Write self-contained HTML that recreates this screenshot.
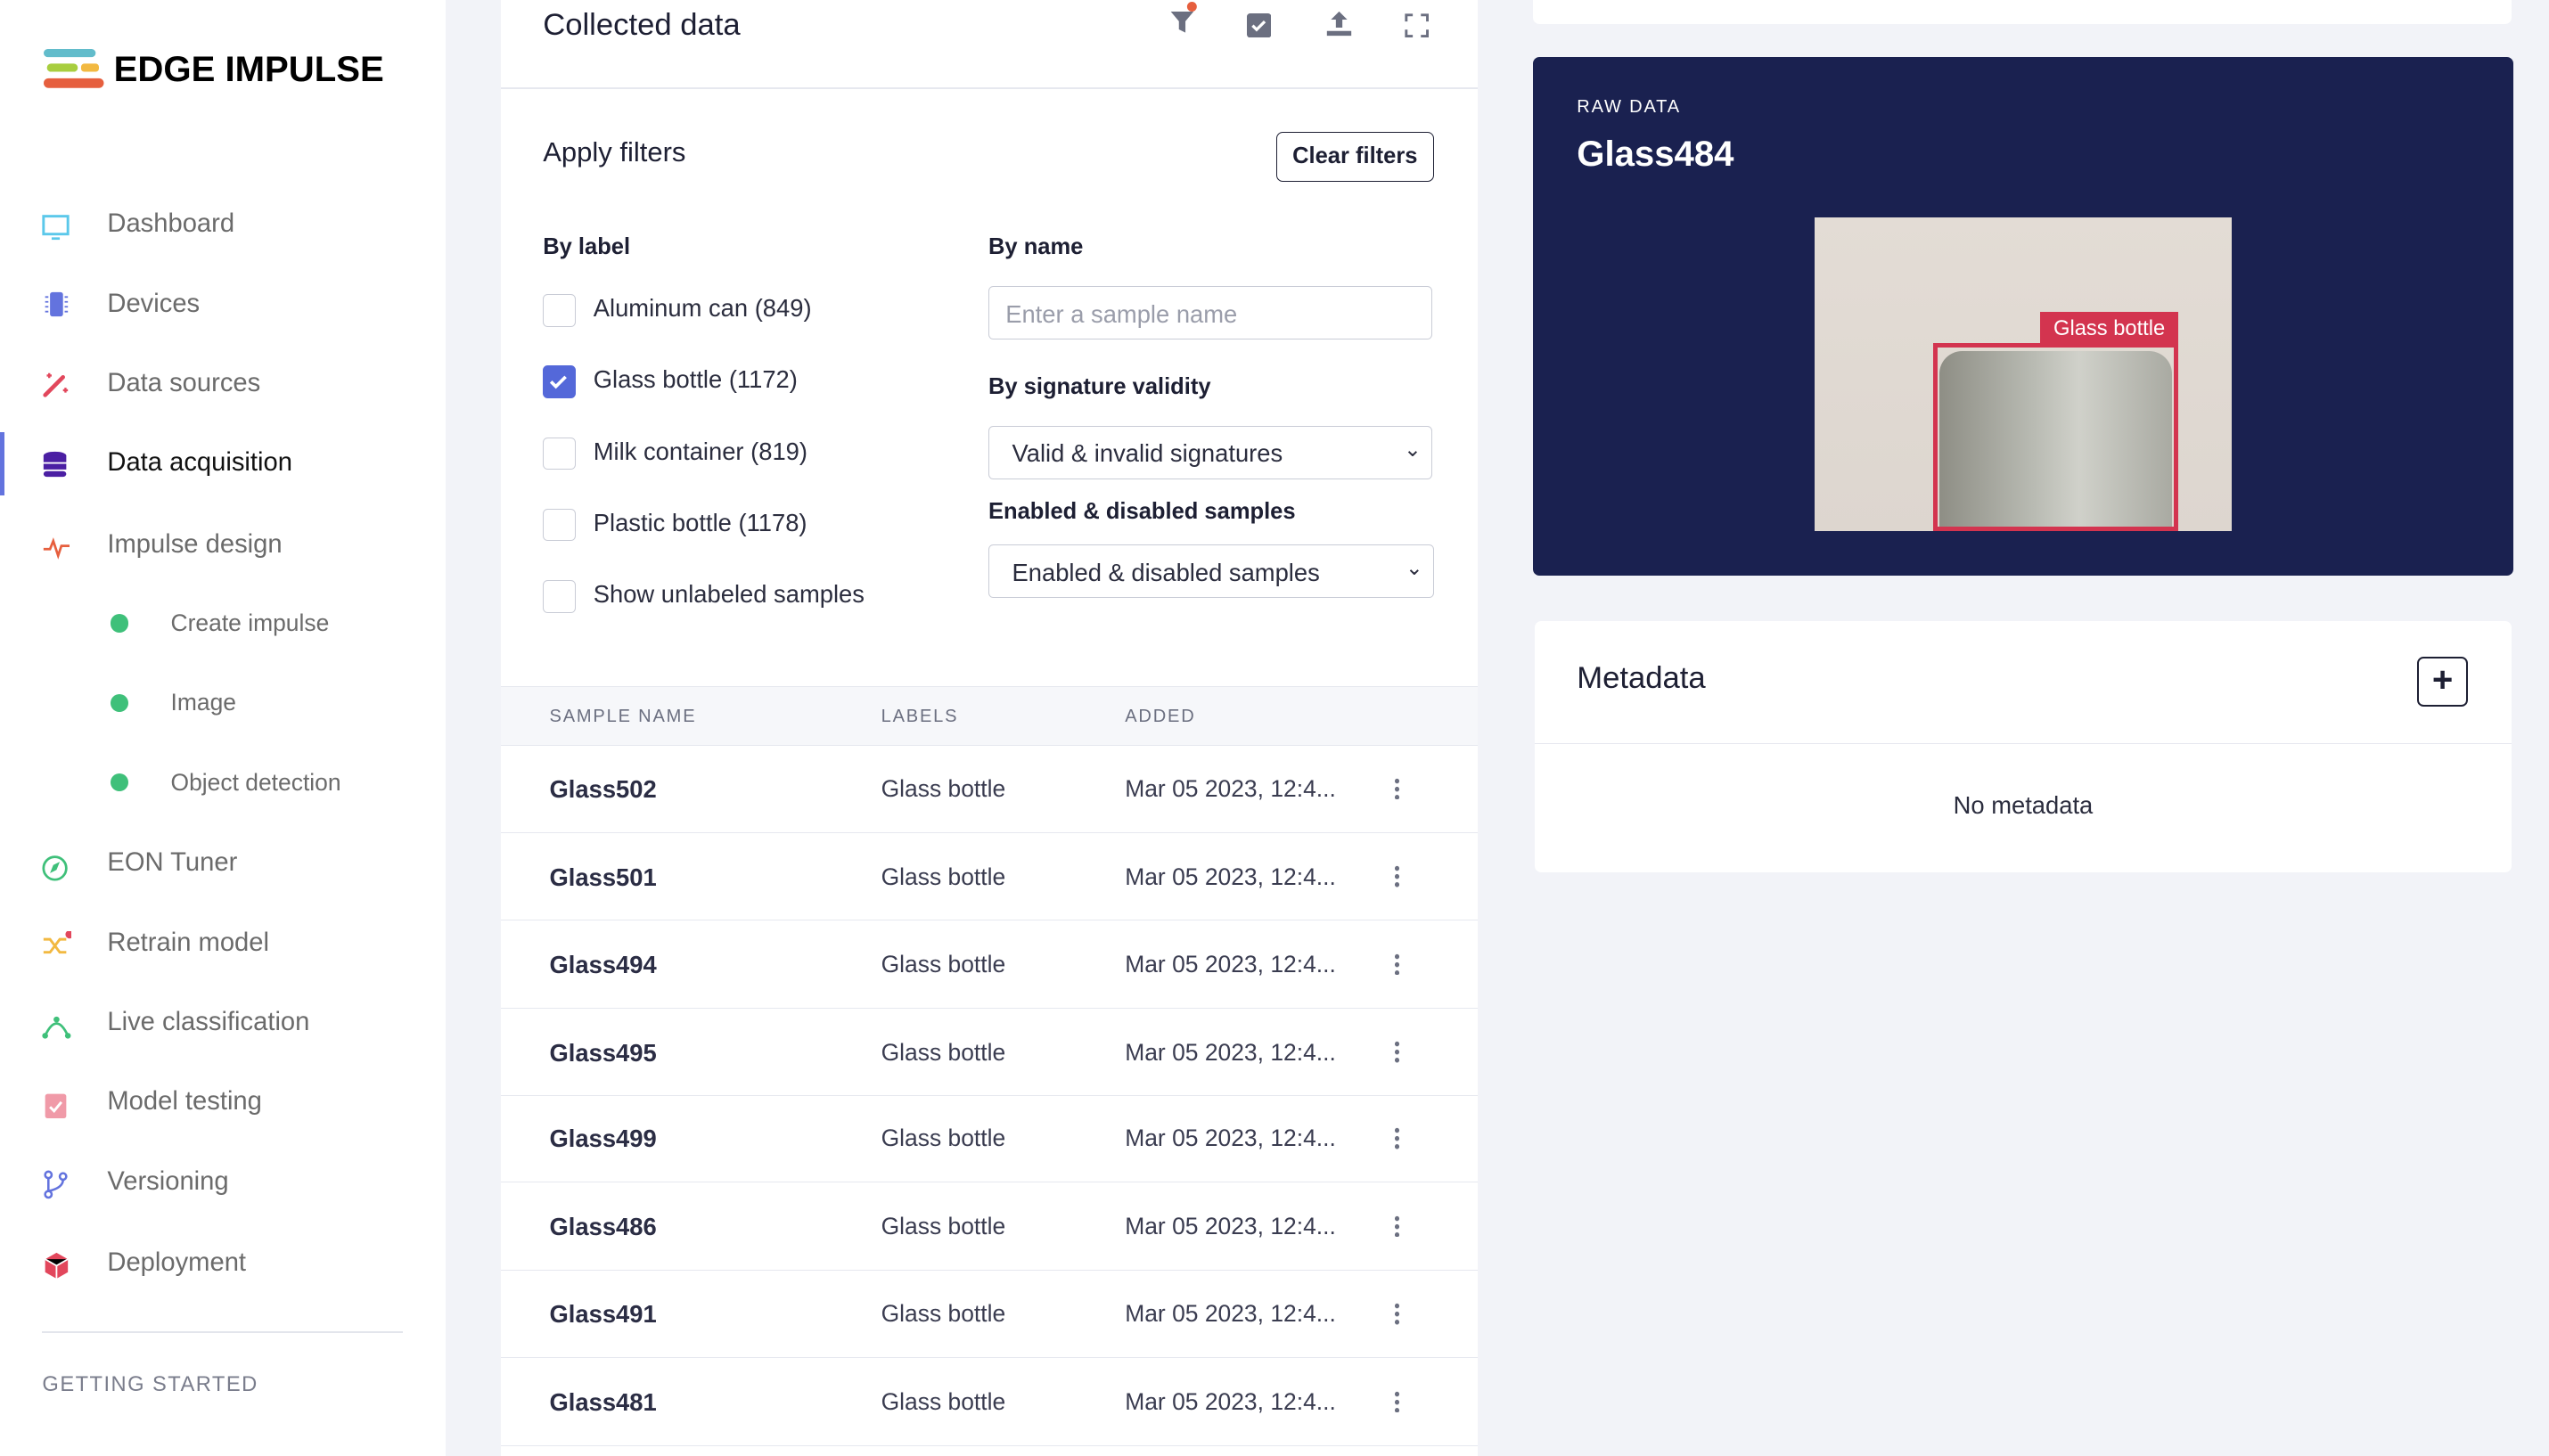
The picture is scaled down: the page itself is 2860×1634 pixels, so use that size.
<!DOCTYPE html>
<html><head><meta charset="utf-8"><style>
html,body{margin:0;padding:0;}
body{width:1568px;height:896px;zoom:1.824;overflow:hidden;background:#f2f3f8;font-family:"Liberation Sans",sans-serif;position:relative;color:#1d1f33}
.abs{position:absolute}
.side{left:0;top:0;width:274px;height:896px;background:#fff}
.nav{position:absolute;left:66px;font-size:16px;color:#6b6b6b}
.ico{position:absolute;left:26px;width:18px;height:18px}
.sub{position:absolute;left:105px;font-size:14.5px;color:#6b6b6b}
.dot{position:absolute;left:68px;width:11px;height:11px;border-radius:50%;background:#3fc07a}
.mid{left:308px;top:0;width:601px;height:896px;background:#fff}
.cb{position:absolute;left:334px;width:20px;height:20px;border:1px solid #c9ccd6;border-radius:3px;box-sizing:border-box;background:#fff}
.lbl{position:absolute;left:365px;font-size:15px;color:#2b2d3e}
.h{position:absolute;font-size:14px;font-weight:bold;color:#1d1f33}
.inp{position:absolute;left:608px;width:273px;height:33px;border:1px solid #c9ccd6;border-radius:3px;box-sizing:border-box;font-size:15px;padding:8px 10px;color:#2b2d3e}
.row{position:absolute;left:308px;width:601px;height:53px;border-bottom:1px solid #e6e8ef}
.row .n{position:absolute;left:30px;top:18px;font-size:15px;font-weight:bold;color:#2b2d44}
.row .l{position:absolute;left:234px;top:18px;font-size:14.5px;color:#3a3c50}
.row .d{position:absolute;left:384px;top:18px;font-size:14.5px;color:#3a3c50}
.row .m{position:absolute;left:550px;top:19px;width:3px;height:14px;background:radial-gradient(circle,#6b6f80 1.4px,transparent 1.6px) 0 0/3px 5px}
</style></head><body>
<div class="abs side"></div>
<svg class="abs" style="left:27px;top:30px" width="38" height="25" viewBox="0 0 38 25"><rect x="0" y="0" width="32" height="5" rx="2.5" fill="#62bccb"/><rect x="2" y="9" width="19" height="5" rx="2.5" fill="#a8ce3f"/><rect x="23" y="9" width="11" height="5" rx="2" fill="#f2b941"/><rect x="0" y="18" width="37" height="6" rx="3" fill="#e65f3e"/></svg>
<div class="abs" style="left:70px;top:30px;font-size:22px;font-weight:bold;color:#000">EDGE IMPULSE</div>

<svg class="ico" style="top:131px" viewBox="0 0 18 18"><rect x="1" y="2" width="15" height="11" fill="none" stroke="#5bc8ea" stroke-width="1.6"/><rect x="6" y="15" width="5" height="1.5" fill="#5bc8ea"/></svg><div class="nav" style="top:129px">Dashboard</div>
<svg class="ico" style="top:179px" viewBox="0 0 18 18"><rect x="5" y="1" width="8" height="15" rx="1.5" fill="#6373de"/><path d="M2 4h2M2 7h2M2 10h2M2 13h2M14 4h2M14 7h2M14 10h2M14 13h2" stroke="#6373de"/></svg><div class="nav" style="top:178px">Devices</div>
<svg class="ico" style="top:228px" viewBox="0 0 18 18"><path d="M2 15L13 4" stroke="#e2475c" stroke-width="2.5" stroke-linecap="round"/><path d="M3 3h3M4.5 1.5v3M13 12h3M14.5 10.5v3" stroke="#e2475c" stroke-width="1.3"/></svg><div class="nav" style="top:227px">Data sources</div>
<div class="abs" style="left:0;top:266px;width:3px;height:39px;background:#6373de"></div>
<svg class="ico" style="top:277px" viewBox="0 0 18 18"><ellipse cx="8" cy="3.5" rx="7" ry="2.5" fill="#4b1fa3"/><rect x="1" y="3.5" width="14" height="4" fill="#4b1fa3"/><rect x="1" y="8.5" width="14" height="3.5" fill="#4b1fa3"/><rect x="1" y="13" width="14" height="3.5" rx="2" fill="#4b1fa3"/></svg><div class="nav" style="top:276px;color:#111">Data acquisition</div>
<svg class="ico" style="top:328px" viewBox="0 0 18 18"><path d="M1 10h4l2-5 3 9 2-6h5" fill="none" stroke="#e65f3e" stroke-width="1.5"/></svg><div class="nav" style="top:326px">Impulse design</div>
<div class="dot" style="top:378px"></div><div class="sub" style="top:375px">Create impulse</div>
<div class="dot" style="top:427px"></div><div class="sub" style="top:424px">Image</div>
<div class="dot" style="top:476px"></div><div class="sub" style="top:473px">Object detection</div>
<svg class="ico" style="top:525px" viewBox="0 0 18 18"><circle cx="8" cy="9" r="7" fill="none" stroke="#3fc07a" stroke-width="1.5"/><path d="M5 12l2-5 4-2-2 5z" fill="#3fc07a"/></svg><div class="nav" style="top:522px">EON Tuner</div>
<svg class="ico" style="top:573px" viewBox="0 0 18 18"><path d="M1 5h4l6 8h4M1 13h4l6-8h4" fill="none" stroke="#f2b941" stroke-width="1.6"/><circle cx="17" cy="2" r="2.5" fill="#e2475c"/></svg><div class="nav" style="top:571px">Retrain model</div>
<svg class="ico" style="top:622px" viewBox="0 0 18 18"><path d="M2 15Q9 0 16 15" fill="none" stroke="#3fc07a" stroke-width="1.5"/><circle cx="2" cy="15" r="1.8" fill="#3fc07a"/><circle cx="16" cy="15" r="1.8" fill="#3fc07a"/><circle cx="9" cy="5" r="1.8" fill="#3fc07a"/></svg><div class="nav" style="top:620px">Live classification</div>
<svg class="ico" style="top:671px" viewBox="0 0 18 18"><rect x="2" y="2" width="13" height="15" rx="1.5" fill="#f09aa8"/><path d="M5 10l2.5 2.5L12 7" fill="none" stroke="#fff" stroke-width="1.6"/></svg><div class="nav" style="top:669px">Model testing</div>
<svg class="ico" style="top:720px" viewBox="0 0 18 18"><circle cx="4" cy="3" r="2" fill="none" stroke="#6373de" stroke-width="1.4"/><circle cx="4" cy="15" r="2" fill="none" stroke="#6373de" stroke-width="1.4"/><circle cx="13" cy="4" r="2" fill="none" stroke="#6373de" stroke-width="1.4"/><path d="M4 5v8M13 6q0 5-9 7" fill="none" stroke="#6373de" stroke-width="1.4"/></svg><div class="nav" style="top:718px">Versioning</div>
<svg class="ico" style="top:770px" viewBox="0 0 18 18"><path d="M9 1l7 4v8l-7 4-7-4V5z" fill="#e2475c"/><path d="M2 5l7 4 7-4M9 9v8" stroke="#fff" stroke-width="1"/></svg><div class="nav" style="top:768px">Deployment</div>
<div class="abs" style="left:26px;top:819px;width:222px;height:1px;background:#e3e5ec"></div>
<div class="abs" style="left:26px;top:845px;font-size:13px;letter-spacing:0.8px;color:#7a7d8c">GETTING STARTED</div>

<div class="abs mid"></div>
<div class="abs" style="left:334px;top:5px;font-size:19px;color:#1d1f33">Collected data</div>
<svg class="abs" style="left:718px;top:1px" width="20" height="22" viewBox="0 0 20 22"><path d="M2 6h14l-5 6v7l-4-2v-5z" fill="#6b6f80"/><circle cx="15" cy="3" r="3" fill="#e65f3e"/></svg>
<svg class="abs" style="left:767px;top:8px" width="15" height="15" viewBox="0 0 15 15"><rect x="0" y="0" width="15" height="15" rx="2" fill="#6b6f80"/><path d="M3.5 7.5l2.5 2.5 5-5" fill="none" stroke="#fff" stroke-width="1.8"/></svg>
<svg class="abs" style="left:815px;top:6px" width="17" height="17" viewBox="0 0 17 17"><path d="M8.5 1l5 5h-3v5h-4V6h-3z M1 13h15v3H1z" fill="#6b6f80"/></svg>
<svg class="abs" style="left:864px;top:8px" width="15" height="15" viewBox="0 0 15 15"><path d="M1 5V1h4M10 1h4v4M14 10v4h-4M5 14H1v-4" fill="none" stroke="#6b6f80" stroke-width="1.6"/></svg>
<div class="abs" style="left:308px;top:54px;width:601px;height:1px;background:#e6e8ef"></div>
<div class="abs" style="left:334px;top:84px;font-size:17px;color:#1d1f33">Apply filters</div>
<div class="abs" style="left:785px;top:81px;width:97px;height:31px;border:1px solid #1d1f33;border-radius:4px;box-sizing:border-box;font-size:14px;font-weight:bold;text-align:center;line-height:29px">Clear filters</div>
<div class="h" style="left:334px;top:144px">By label</div>
<div class="h" style="left:608px;top:144px">By name</div>
<div class="cb" style="top:181px"></div><div class="lbl" style="top:181px">Aluminum can (849)</div>
<div class="cb" style="top:225px;background:#5468d9;border-color:#5468d9"><svg width="18" height="18" viewBox="0 0 18 18"><path d="M4.5 9.5l3 3 6-6" fill="none" stroke="#fff" stroke-width="2"/></svg></div><div class="lbl" style="top:225px">Glass bottle (1172)</div>
<div class="cb" style="top:269px"></div><div class="lbl" style="top:269px">Milk container (819)</div>
<div class="cb" style="top:313px"></div><div class="lbl" style="top:313px">Plastic bottle (1178)</div>
<div class="cb" style="top:357px"></div><div class="lbl" style="top:357px">Show unlabeled samples</div>
<div class="inp" style="top:176px;color:#9a9daa">Enter a sample name</div>
<div class="h" style="left:608px;top:230px">By signature validity</div>
<div class="inp" style="top:262px;padding-left:14px">Valid &amp; invalid signatures<span style="position:absolute;right:6px;top:6px;font-size:13px">&#8964;</span></div>
<div class="h" style="left:608px;top:307px">Enabled &amp; disabled samples</div>
<div class="inp" style="top:335px;padding-left:14px;width:274px">Enabled &amp; disabled samples<span style="position:absolute;right:6px;top:6px;font-size:13px">&#8964;</span></div>
<div class="abs" style="left:308px;top:422px;width:601px;height:37px;background:#f6f7fa;border-top:1px solid #e6e8ef;border-bottom:1px solid #e6e8ef;box-sizing:border-box"></div>
<div class="abs" style="left:338px;top:435px;font-size:11px;letter-spacing:1px;color:#6b6f80">SAMPLE NAME</div>
<div class="abs" style="left:542px;top:435px;font-size:11px;letter-spacing:1px;color:#6b6f80">LABELS</div>
<div class="abs" style="left:692px;top:435px;font-size:11px;letter-spacing:1px;color:#6b6f80">ADDED</div>
<div class="row" style="top:459px"><div class="n">Glass502</div><div class="l">Glass bottle</div><div class="d">Mar 05 2023, 12:4...</div><div class="m"></div></div>
<div class="row" style="top:513px"><div class="n">Glass501</div><div class="l">Glass bottle</div><div class="d">Mar 05 2023, 12:4...</div><div class="m"></div></div>
<div class="row" style="top:567px"><div class="n">Glass494</div><div class="l">Glass bottle</div><div class="d">Mar 05 2023, 12:4...</div><div class="m"></div></div>
<div class="row" style="top:621px"><div class="n">Glass495</div><div class="l">Glass bottle</div><div class="d">Mar 05 2023, 12:4...</div><div class="m"></div></div>
<div class="row" style="top:674px"><div class="n">Glass499</div><div class="l">Glass bottle</div><div class="d">Mar 05 2023, 12:4...</div><div class="m"></div></div>
<div class="row" style="top:728px"><div class="n">Glass486</div><div class="l">Glass bottle</div><div class="d">Mar 05 2023, 12:4...</div><div class="m"></div></div>
<div class="row" style="top:782px"><div class="n">Glass491</div><div class="l">Glass bottle</div><div class="d">Mar 05 2023, 12:4...</div><div class="m"></div></div>
<div class="row" style="top:836px"><div class="n">Glass481</div><div class="l">Glass bottle</div><div class="d">Mar 05 2023, 12:4...</div><div class="m"></div></div>

<div class="abs" style="left:943px;top:-10px;width:602px;height:25px;background:#fff;border-radius:4px"></div>
<div class="abs" style="left:943px;top:35px;width:603px;height:319px;background:#1a2150;border-radius:4px"></div>
<div class="abs" style="left:970px;top:60px;font-size:11px;letter-spacing:1px;color:#fff">RAW DATA</div>
<div class="abs" style="left:970px;top:82px;font-size:22px;font-weight:bold;color:#fff">Glass484</div>
<div class="abs" style="left:1116px;top:134px;width:257px;height:193px;background:linear-gradient(180deg,#e3dcd5,#ddd6cf)"></div>
<div class="abs" style="left:1193px;top:216px;width:143px;height:108px;border-radius:14px 14px 0 0;background:linear-gradient(90deg,#8e8e85,#b8bab2 40%,#d0d1ca 60%,#a9aaa2);"></div>
<div class="abs" style="left:1189px;top:211px;width:151px;height:116px;border:3px solid #d3344f;box-sizing:border-box"></div>
<div class="abs" style="left:1255px;top:192px;width:85px;height:20px;background:#d3344f;color:#fff;font-size:13px;text-align:center;line-height:21px">Glass bottle</div>

<div class="abs" style="left:944px;top:382px;width:601px;height:155px;background:#fff;border-radius:4px"></div>
<div class="abs" style="left:970px;top:407px;font-size:19px;color:#1d1f33">Metadata</div>
<div class="abs" style="left:1487px;top:404px;width:31px;height:31px;border:1.5px solid #1d1f33;border-radius:4px;box-sizing:border-box;text-align:center;line-height:26px;font-size:22px;font-weight:bold">+</div>
<div class="abs" style="left:944px;top:457px;width:601px;height:1px;background:#e6e8ef"></div>
<div class="abs" style="left:944px;top:487px;width:601px;text-align:center;font-size:15px;color:#2b2d3e">No metadata</div>
</body></html>
